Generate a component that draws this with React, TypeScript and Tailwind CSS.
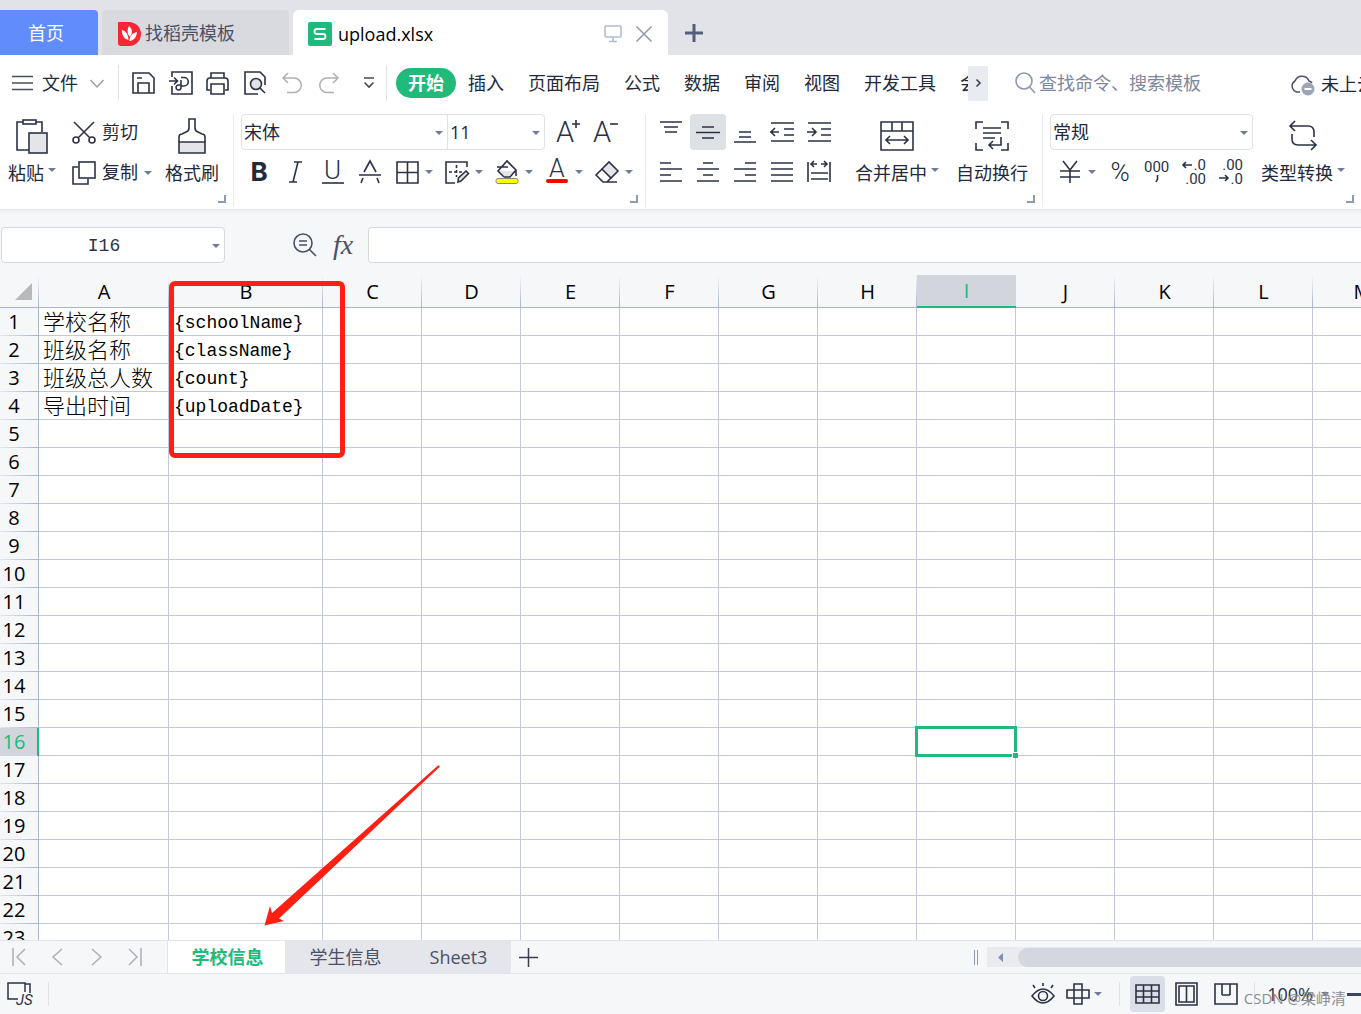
import type { ReactNode } from "react";

type IconProps = { w: number; h: number; children: ReactNode; className?: string; sw?: number };

function Icon({ w, h, children, className = "text-[#2b3245]", sw = 1.6 }: IconProps) {
  return (
    <svg
      width={w}
      height={h}
      viewBox={`0 0 ${w} ${h}`}
      fill="none"
      stroke="currentColor"
      strokeWidth={sw}
      className={`block shrink-0 overflow-visible ${className}`}
      aria-hidden="true"
    >
      {children}
    </svg>
  );
}

function Caret({ className = "" }: { className?: string }) {
  return (
    <svg width="8" height="4" viewBox="0 0 8 4" className={`block shrink-0 ${className}`} aria-hidden="true">
      <path d="M0 0H8L4 4Z" fill="#6f7c99" />
    </svg>
  );
}

function Launcher() {
  return (
    <button aria-label="更多设置" className="block">
      <Icon w={8} h={8} className="text-[#8e99b3]" sw={2}>
        <path d="M0 7H7V0" />
      </Icon>
    </button>
  );
}

function Group({ width, last, children }: { width: string; last?: boolean; children: ReactNode }) {
  return (
    <div className={`flex shrink-0 flex-col pl-[7px] ${width} ${last ? "" : "border-r border-[#eaecf0]"}`}>
      <div className="flex items-start">{children}</div>
      <div className="flex justify-end pt-[5px] pr-[7px]">
        <Launcher />
      </div>
    </div>
  );
}

function Tool({ label, caret, active, children }: { label: string; caret?: boolean; active?: boolean; children: ReactNode }) {
  return (
    <button aria-label={label} title={label} className={`flex h-9 shrink-0 items-center ${caret ? "w-[50px]" : "w-[37px]"}`}>
      <span className={`flex h-9 w-9 items-center justify-center rounded ${active ? "bg-[#dde1e6]" : ""}`}>{children}</span>
      {caret && <Caret />}
    </button>
  );
}

function BigTool({ label, caret, children }: { label: string; caret?: boolean; children: ReactNode }) {
  return (
    <button className="flex shrink-0 flex-col items-center">
      <span className="flex h-10 items-center justify-center pt-1">{children}</span>
      <span className="flex h-9 items-center gap-1 pt-px leading-9 whitespace-nowrap">
        {label}
        {caret && <Caret className="mb-1.5" />}
      </span>
    </button>
  );
}

function Combo({ label, value, className }: { label: string; value: string; className: string }) {
  return (
    <div className={`relative h-9 shrink-0 border border-[#dfe1e6] bg-white ${className}`}>
      <select aria-label={label} className="h-full w-full appearance-none bg-transparent pt-px pr-5 pl-0.5 outline-none">
        <option>{value}</option>
      </select>
      <Caret className="pointer-events-none absolute top-4 right-1" />
    </div>
  );
}

const thinText = { fontFamily: "Roboto", fontWeight: 300, fill: "currentColor", stroke: "none" };
const digitText = { fontFamily: "Roboto", fontWeight: 400, fill: "currentColor", stroke: "none" };

function TabBar() {
  return (
    <div className="flex h-[55px] shrink-0 items-end bg-[#e1e3e8]">
      <button className="h-[45px] w-[98px] rounded-tr bg-[#618dfc] pt-0.5 pr-1.5 text-white">首页</button>
      <button className="ml-1 flex h-[45px] w-[187px] items-center rounded-t bg-[#d9dadf] pt-0.5 pl-4 text-[#4a5166]">
        <svg width="23" height="24" viewBox="0 0 23 24" className="mr-1 block" aria-hidden="true">
          <path d="M1 0H11A12 12 0 0 1 11 24H3Q0 24 0 21V1Q0 0 1 0Z" fill="#fb2536" />
          <path d="M11 4C15 8 14.500 11 12 15C9 12 9 8 11 4Z" fill="#fff" />
          <path d="M4 8C8 9.500 10 12 10.500 18C6 17 3.500 13 4 8Z" fill="#fff" />
          <path d="M19 10C18.500 15 16 18.500 11.500 19C11.500 14.500 14 11 19 10Z" fill="#fff" />
        </svg>
        找稻壳模板
      </button>
      <div className="ml-1 flex h-[45px] w-[375px] items-center rounded-t-md bg-white pt-0.5 pr-4 pl-[15px] text-black">
        <svg width="24" height="24" viewBox="0 0 24 24" className="block" aria-hidden="true">
          <rect width="24" height="24" rx="2" fill="#1fba7b" />
          <path d="M17.500 7H9Q6.500 7 6.500 9.500T9 12H15Q17.500 12 17.500 14.500T15 17H6.500" fill="none" stroke="#fff" strokeWidth="1.800" />
        </svg>
        <span className="ml-1.5 leading-6">upload.xlsx</span>
        <button aria-label="演示" className="ml-auto">
          <Icon w={18} h={18} className="text-[#b3bccf]">
            <rect x="1" y="1" width="16" height="11" rx="1" />
            <path d="M9 12V16M5 16.500H13" />
          </Icon>
        </button>
        <button aria-label="关闭" className="ml-[14px]">
          <Icon w={16} h={16} className="text-[#8c97b0]" sw={1.5}>
            <path d="M.5 .5L15.500 15.500M15.500 .5L.5 15.500" />
          </Icon>
        </button>
      </div>
      <button aria-label="新建" className="ml-[17px] flex h-[45px] items-center">
        <Icon w={18} h={18} className="text-[#535e7b]" sw={3}>
          <path d="M9 0V18M0 9H18" />
        </Icon>
      </button>
    </div>
  );
}

function QuickButton({ label, children, className = "w-[38px]" }: { label: string; children: ReactNode; className?: string }) {
  return (
    <button aria-label={label} title={label} className={`flex h-9 shrink-0 items-center justify-center ${className}`}>
      {children}
    </button>
  );
}

function MenuBar() {
  const tabs = ["插入", "页面布局", "公式", "数据", "审阅", "视图", "开发工具", "会"];
  return (
    <div className="flex h-[55px] shrink-0 items-center bg-white pt-px text-[#23293a]">
      <button className="flex h-9 shrink-0 items-center pl-3">
        <Icon w={21} h={16} className="text-[#4a4f5c]" sw={1.5}>
          <path d="M0 1.500H21M0 8H21M0 14.500H21" />
        </Icon>
        <span className="ml-[9px] pt-px whitespace-nowrap">文件</span>
        <Icon w={14} h={9} className="ml-3 text-[#9a9da5]" sw={1.5}>
          <path d="M.5 1L7 8L13.500 1" />
        </Icon>
      </button>
      <div className="ml-[14px] flex h-9 shrink-0 items-center border-x border-[#e1e4ea] pl-[5px]">
        <QuickButton label="保存">
          <Icon w={23} h={22}>
            <path d="M1 1H17L22 6V21H1ZM6 21V11H17V21M5 6H10" />
          </Icon>
        </QuickButton>
        <QuickButton label="输出为PDF">
          <Icon w={24} h={24}>
            <path d="M3 6V1H23V23H3V15M0 10H8M5 6.500L8.500 10L5 13.500M12 6.500H15A4 4 0 0 1 15 15H12V16A2.500 2.500 0 1 1 9.500 14H12V9" />
          </Icon>
        </QuickButton>
        <QuickButton label="打印" className="w-[34px]">
          <Icon w={23} h={23}>
            <path d="M5 6V1H18V6M4 18H1V9Q1 6 4 6H19Q22 6 22 9V18H19M5 12H18V22H5Z" />
          </Icon>
        </QuickButton>
        <QuickButton label="打印预览" className="w-[42px]">
          <Icon w={23} h={24}>
            <path d="M14 23H1V1H16L21 6V14" />
            <circle cx="12" cy="13" r="5.500" fill="#e1e3e6" />
            <path d="M16 17L21 22" />
          </Icon>
        </QuickButton>
        <QuickButton label="撤销" className="w-[31px]">
          <Icon w={20} h={22} className="text-[#adafb5]" sw={1.5}>
            <path d="M6 1L1 6L6 11M1 6H12A7 7 0 0 1 12 20.500H5" />
          </Icon>
        </QuickButton>
        <QuickButton label="恢复" className="w-[44px]">
          <Icon w={20} h={22} className="text-[#adafb5]" sw={1.5}>
            <path d="M14 1L19 6L14 11M19 6H8A7 7 0 0 0 8 20.500H15" />
          </Icon>
        </QuickButton>
        <QuickButton label="自定义" className="w-[35px]">
          <Icon w={12} h={12} className="text-[#434857]">
            <path d="M1 1H11M1.500 5.500L6 10L10.500 5.500" />
          </Icon>
        </QuickButton>
      </div>
      <nav className="ml-[9px] flex w-[572px] shrink-0 overflow-hidden whitespace-nowrap">
        <button className="h-[30px] shrink-0 rounded-full bg-[#21ba7b] px-3 pt-px font-bold text-white">开始</button>
        {tabs.map((t) => (
          <button key={t} className="h-[30px] shrink-0 px-3 pt-px">
            {t}
          </button>
        ))}
      </nav>
      <button aria-label="更多选项卡" className="flex h-[35px] w-5 shrink-0 items-center justify-center bg-[#e8ebf0]">
        <Icon w={5} h={8} className="text-[#3a4052]">
          <path d="M.5 .5L4 4L.5 7.500" />
        </Icon>
      </button>
      <label className="ml-[27px] flex min-w-0 flex-1 items-center">
        <Icon w={21} h={22} className="text-[#8c97b0]">
          <circle cx="9" cy="9" r="8" />
          <path d="M14.500 15L20 21" />
        </Icon>
        <input
          aria-label="搜索"
          placeholder="查找命令、搜索模板"
          className="ml-[3px] w-full min-w-0 bg-transparent pt-px outline-none placeholder:text-[#7b879f] placeholder:opacity-100"
        />
      </label>
      <button className="flex w-[71px] shrink-0 items-center overflow-hidden pt-0.5 whitespace-nowrap">
        <Icon w={25} h={23} className="mr-1.5 text-[#4a5166]" sw={1.5}>
          <path d="M10 19H7A6 6 0 0 1 5 8A7.500 7.500 0 0 1 19 8A6 6 0 0 1 22 10" />
          <circle cx="18" cy="16" r="6.500" fill="#9ca5b8" stroke="none" />
          <path d="M14.500 16H21.500" stroke="#fff" strokeWidth="2" />
        </Icon>
        未上云
      </button>
    </div>
  );
}

function Ribbon() {
  return (
    <div className="relative z-10 flex h-[99px] shrink-0 overflow-hidden bg-white pt-1 pb-0.5 text-[#23293a]">
      <Group width="w-[234px]">
        <div className="ml-px">
          <BigTool label="粘贴" caret>
            <Icon w={32} h={35}>
              <path d="M7 3H1V31H13M20 3H26V13" />
              <rect x="7" y="1" width="13" height="4" />
              <rect x="13" y="14" width="18" height="20" fill="#e3e5e7" />
            </Icon>
          </BigTool>
        </div>
        <div className="ml-4 flex shrink-0 flex-col gap-1">
          <button className="flex h-9 items-center gap-1.5 pt-px">
            <Icon w={24} h={24}>
              <path d="M2 1L18 17M22 1L6 17" />
              <circle cx="4" cy="19" r="3" />
              <circle cx="20" cy="19" r="3" />
            </Icon>
            剪切
          </button>
          <button className="flex h-9 items-center gap-1.5 pt-px">
            <Icon w={24} h={24}>
              <path d="M6 6H1V23H16V18" />
              <rect x="7" y="1" width="16" height="16" />
            </Icon>
            复制
            <Caret />
          </button>
        </div>
        <div className="ml-[13px]">
          <BigTool label="格式刷">
            <Icon w={28} h={36}>
              <path d="M1 24H27V35H1Z" fill="#e3e5e7" />
              <path d="M1 24V19Q1 16 4 16L8 14Q11 13 11 10V1H17V10Q17 13 20 14L24 16Q27 16 27 19V24" />
            </Icon>
          </BigTool>
        </div>
      </Group>

      <Group width="w-[412px]">
        <div className="flex flex-col gap-1">
          <div className="flex">
            <Combo label="字体" value="宋体" className="w-[207px] rounded-l" />
            <Combo label="字号" value="11" className="-ml-px w-[98px] rounded-r" />
            <div className="ml-[5px] flex">
              <Tool label="增大字号">
                <Icon w={24} h={26}>
                  <text x="0" y="23" fontSize="29" style={thinText}>A</text>
                  <path d="M16 5H24M20 1V9" />
                </Icon>
              </Tool>
              <Tool label="减小字号">
                <Icon w={24} h={26}>
                  <text x="0" y="23" fontSize="29" style={thinText}>A</text>
                  <path d="M17 5H25" />
                </Icon>
              </Tool>
            </div>
          </div>
          <div className="flex">
            <Tool label="加粗">
              <span className="font-['Inter'] text-[26px] leading-9 font-bold">B</span>
            </Tool>
            <Tool label="倾斜">
              <Icon w={14} h={22}>
                <path d="M5 1H13M0 21H8M9 1L4 21" />
              </Icon>
            </Tool>
            <Tool label="下划线">
              <Icon w={24} h={24}>
                <text x="3" y="19" fontSize="26" style={thinText}>U</text>
                <path d="M1 23H23" />
              </Icon>
            </Tool>
            <Tool label="删除线">
              <Icon w={22} h={23}>
                <path d="M5 11L11 0L17 11M0 14H22M4 17L2 22M18 17L20 22" />
              </Icon>
            </Tool>
            <Tool label="边框" caret>
              <Icon w={23} h={23}>
                <path d="M1 1H22V22H1ZM11.500 1V22M1 11.500H22" />
              </Icon>
            </Tool>
            <Tool label="绘图边框" caret>
              <Icon w={24} h={24}>
                <path d="M22 7V2H1V23H10" />
                <path d="M11.500 5V17M4 12H17" strokeDasharray="3 2" />
                <path d="M13 22L13.500 18L21 11L23.500 13.500L16 21Z" fill="#e3e5e7" />
              </Icon>
            </Tool>
            <Tool label="填充颜色" caret>
              <Icon w={24} h={24}>
                <path d="M3 11H20L12 18Z" fill="#e3e5e7" stroke="none" />
                <path d="M9 17L3 11L12 1L21 10V16M9 17H15L21 10M2 7H13" />
                <rect x="1" y="18.500" width="22" height="5" rx="2" fill="#ffff00" stroke="#8a8c70" strokeWidth="1" />
              </Icon>
            </Tool>
            <Tool label="字体颜色" caret>
              <Icon w={22} h={24}>
                <text x="3" y="17" fontSize="25" style={thinText}>A</text>
                <rect x="0" y="19" width="22" height="4" rx="2" fill="#ff0000" stroke="none" />
              </Icon>
            </Tool>
            <Tool label="清除" caret>
              <Icon w={24} h={23}>
                <path d="M7 8L14 1L23 10L16 17Z" fill="#e3e5e7" />
                <path d="M7 8L1 14L8 21H22M16 17L12 21" />
              </Icon>
            </Tool>
          </div>
        </div>
      </Group>

      <Group width="w-[397px]">
        <div className="flex shrink-0 flex-col gap-1">
          <div className="flex">
            <Tool label="顶端对齐">
              <Icon w={22} h={22}>
                <path d="M0 1H22M4 6H18M5 11H17" />
              </Icon>
            </Tool>
            <Tool label="垂直居中" active>
              <Icon w={24} h={22}>
                <path d="M6 6H18M0 11.500H24M6 17H18" />
              </Icon>
            </Tool>
            <Tool label="底端对齐">
              <Icon w={22} h={22}>
                <path d="M5 11H17M5 16H17M0 21H22" />
              </Icon>
            </Tool>
            <Tool label="减少缩进量">
              <Icon w={24} h={20}>
                <path d="M1 1H24M14 7H24M14 13H24M1 19H24M0 10H9M5 6L1 10L5 14" />
              </Icon>
            </Tool>
            <Tool label="增加缩进量">
              <Icon w={24} h={20}>
                <path d="M1 1H24M14 7H24M14 13H24M1 19H24M0 10H9M5 6L9 10L5 14" />
              </Icon>
            </Tool>
          </div>
          <div className="flex">
            <Tool label="左对齐">
              <Icon w={22} h={20}>
                <path d="M0 1H11M0 7H22M0 13H11M0 19H22" />
              </Icon>
            </Tool>
            <Tool label="水平居中">
              <Icon w={22} h={20}>
                <path d="M6 1H16M0 7H22M6 13H16M0 19H22" />
              </Icon>
            </Tool>
            <Tool label="右对齐">
              <Icon w={22} h={20}>
                <path d="M11 1H22M0 7H22M11 13H22M0 19H22" />
              </Icon>
            </Tool>
            <Tool label="两端对齐">
              <Icon w={22} h={20}>
                <path d="M0 1H22M0 7H22M0 13H22M0 19H22" />
              </Icon>
            </Tool>
            <Tool label="分散对齐">
              <Icon w={24} h={22}>
                <path d="M1 1V21M23 1V21M4 12H21M4 18H21M4 3H10M7 0L4 3L7 6M14 3H20M17 0L20 3L17 6" />
              </Icon>
            </Tool>
          </div>
        </div>
        <div className="ml-[17px] flex gap-[17px]">
          <BigTool label="合并居中" caret>
            <Icon w={34} h={30}>
              <path d="M1 1H33V29H1ZM1 10H33M12 1V10M22 1V10M6 19H28M10 15L6 19L10 23M24 15L28 19L24 23" />
            </Icon>
          </BigTool>
          <BigTool label="自动换行">
            <Icon w={34} h={30}>
              <path d="M1 8V1H8M26 1H33V8M1 22V29H8M33 22V29H26M8 7H26M8 12H26M8 17H20M26 16V24H14M18 20L14 24L18 28" />
            </Icon>
          </BigTool>
        </div>
      </Group>

      <Group width="w-[318px]" last>
        <div className="flex shrink-0 flex-col gap-1">
          <Combo label="数字格式" value="常规" className="w-[203px] rounded" />
          <div className="flex pl-0.5">
            <Tool label="货币" caret>
              <Icon w={22} h={22}>
                <path d="M4 0L11 9L18 0M1 10H21M1 16H21M11 9V22" />
              </Icon>
            </Tool>
            <Tool label="百分比">
              <span className="font-['Roboto'] text-[26px] leading-9 font-light">%</span>
            </Tool>
            <Tool label="千位分隔">
              <Icon w={26} h={25}>
                <text x="0" y="12" fontSize="15" style={digitText}>000</text>
                <path d="M13.500 15V19L12 22" />
              </Icon>
            </Tool>
            <Tool label="减少小数位数">
              <Icon w={24} h={26}>
                <text x="24" y="11" fontSize="15" textAnchor="end" style={digitText}>.0</text>
                <text x="24" y="25" fontSize="15" textAnchor="end" style={digitText}>.00</text>
                <path d="M1 6H10M4 3L1 6L4 9" />
              </Icon>
            </Tool>
            <Tool label="增加小数位数">
              <Icon w={24} h={26}>
                <text x="24" y="11" fontSize="15" textAnchor="end" style={digitText}>.00</text>
                <text x="24" y="25" fontSize="15" textAnchor="end" style={digitText}>.0</text>
                <path d="M0 19H9M6 16L9 19L6 22" />
              </Icon>
            </Tool>
          </div>
        </div>
        <div className="ml-2">
          <BigTool label="类型转换" caret>
            <Icon w={28} h={32}>
              <path d="M6 1L1 6L6 11M1 6H19Q25 6 25 12V17M22 20L27 25L22 30M27 25H9Q3 25 3 19V14" />
            </Icon>
          </BigTool>
        </div>
      </Group>
    </div>
  );
}

function FormulaBar() {
  return (
    <div className="flex h-[66px] shrink-0 items-center border-t border-[#e6e8ea] bg-linear-to-b from-[#eceef0] from-0% to-[#f6f7f9] to-8% pt-1 pl-px">
      <div className="relative h-9 w-[224px] shrink-0 rounded border border-[#d6d8dd] bg-white">
        <input
          aria-label="名称框"
          defaultValue="I16"
          className="h-full w-full bg-transparent pt-0.5 pr-[18px] text-center font-['Liberation_Mono',monospace] text-[#2b3245] outline-none"
        />
        <Caret className="pointer-events-none absolute top-4 right-1" />
      </div>
      <button aria-label="查找函数" className="ml-[68px]">
        <Icon w={24} h={24} className="text-[#4a5166]">
          <circle cx="10" cy="10" r="9" />
          <path d="M6 8H14M6 12H14M16.500 16.500L23 23" />
        </Icon>
      </button>
      <button aria-label="插入函数" className="ml-[14px] w-[24px] font-['Liberation_Serif',serif] text-[28px] leading-9 text-[#4a5166] italic">
        fx
      </button>
      <input aria-label="编辑栏" className="ml-[13px] h-9 min-w-0 flex-1 rounded-l border border-r-0 border-[#d6d8dd] bg-white px-2 outline-none" />
    </div>
  );
}

const columns = ["A", "B", "C", "D", "E", "F", "G", "H", "I", "J", "K", "L", "M"];
const rows = Array.from({ length: 23 }, (_, i) => i + 1);
const cells: Record<string, string> = {
  A1: "学校名称",
  B1: "{schoolName}",
  A2: "班级名称",
  B2: "{className}",
  A3: "班级总人数",
  B3: "{count}",
  A4: "导出时间",
  B4: "{uploadDate}",
};

function Sheet() {
  return (
    <div className="relative min-h-0 flex-1 overflow-hidden bg-white">
      <table className="w-[1412px] table-fixed border-separate border-spacing-0 text-black">
        <colgroup>
          <col className="w-[39px]" />
          {columns.map((c) => (
            <col key={c} className={c === "A" ? "w-[130px]" : c === "B" ? "w-[154px]" : "w-[99px]"} />
          ))}
        </colgroup>
        <thead>
          <tr className="h-[33px] bg-[#f6f7f9] text-[20px] leading-[31px]">
            <th aria-label="全选" className="border-b border-[#a9b4cd] bg-[linear-gradient(to_bottom,#f6f7f9,#a9b4cd)] bg-[length:1px_100%] bg-right bg-no-repeat p-0">
              <svg width="17" height="17" viewBox="0 0 17 17" className="ml-[15px] block" aria-hidden="true">
                <path d="M17 0V17H0Z" fill="#b9b9b9" />
              </svg>
            </th>
            {columns.map((c) =>
              c === "I" ? (
                <th key={c} scope="col" className="border-b-2 border-[#21ba7b] bg-[#d2d5dc] p-0 font-normal text-[#21ba7b]">
                  {c}
                </th>
              ) : (
                <th
                  key={c}
                  scope="col"
                  className="border-b border-[#a9b4cd] bg-[linear-gradient(to_bottom,#f6f7f9,#a9b4cd)] bg-[length:1px_100%] bg-right bg-no-repeat p-0 font-normal"
                >
                  {c}
                </th>
              ),
            )}
          </tr>
        </thead>
        <tbody>
          {rows.map((r) => (
            <tr key={r} className="h-7">
              <th
                scope="row"
                className={
                  r === 16
                    ? "border-r-2 border-[#21ba7b] bg-[#d2d5dc] p-0 pr-[9px] text-[20px] leading-7 font-normal text-[#21ba7b]"
                    : "border-r border-[#a9b4cd] bg-[#f6f7f9] bg-[linear-gradient(to_right,#e3e7ee,#a9b4cd)] bg-[length:100%_1px] bg-bottom bg-no-repeat p-0 pr-2.5 text-[20px] leading-7 font-normal"
                }
              >
                {r}
              </th>
              {columns.map((c) => {
                const id = `${c}${r}`;
                return (
                  <td
                    key={id}
                    className={`relative border-r border-b border-[#c3c9da] p-0 whitespace-nowrap ${
                      c === "A"
                        ? "pl-1 text-[22px] leading-[27px] font-light"
                        : "pt-1 pl-[5px] font-['Liberation_Mono',monospace] text-[18px] leading-[23px]"
                    }`}
                  >
                    {cells[id]}
                    {id === "I16" && (
                      <div className="absolute -inset-0.5 z-10 border-[3px] border-[#21ba7b]">
                        <div className="absolute -right-1 -bottom-1 h-1.5 w-1.5 border-t border-l border-white bg-[#21ba7b]" />
                      </div>
                    )}
                  </td>
                );
              })}
            </tr>
          ))}
        </tbody>
      </table>
      <div className="pointer-events-none absolute top-1.5 left-[169px] z-20 h-[177px] w-[176px] rounded-md border-[5px] border-[#ff2013]" />
      <svg width="176" height="161" viewBox="0 0 176 161" className="pointer-events-none absolute top-[490px] left-[264px] z-20" aria-hidden="true">
        <path d="M175.500 .5L174 .5L8 148L6 141L0.500 160.500L20 156L15 153.500L175.500 2Z" fill="#ff2013" />
      </svg>
    </div>
  );
}

function SheetTabs() {
  return (
    <div className="flex h-[34px] shrink-0 items-stretch border-y border-[#e1e4ea] bg-[#f6f7f9] text-[#4a5166]">
      <div className="flex w-[168px] shrink-0 items-center border-r border-[#e1e4ea] pl-3 text-[#adafb5]">
        <button aria-label="第一个工作表">
          <Icon w={14} h={18} className="" sw={1.5}>
            <path d="M1 0V18M13 1L5 9L13 17" />
          </Icon>
        </button>
        <button aria-label="上一个工作表" className="ml-[26px]">
          <Icon w={11} h={18} className="" sw={1.5}>
            <path d="M10 1L1 9L10 17" />
          </Icon>
        </button>
        <button aria-label="下一个工作表" className="ml-7">
          <Icon w={11} h={18} className="" sw={1.5}>
            <path d="M1 1L10 9L1 17" />
          </Icon>
        </button>
        <button aria-label="最后一个工作表" className="ml-[26px]">
          <Icon w={14} h={18} className="" sw={1.5}>
            <path d="M13 0V18M1 1L9 9L1 17" />
          </Icon>
        </button>
      </div>
      <button className="w-[117px] shrink-0 bg-white pl-0.5 font-bold text-[#21ba7b]">学校信息</button>
      <button className="w-[121px] shrink-0 bg-[#e4e6eb]">学生信息</button>
      <button className="w-[105px] shrink-0 bg-[#e4e6eb]">Sheet3</button>
      <button aria-label="新建工作表" className="ml-2 flex items-center">
        <Icon w={19} h={19} className="text-[#3a4052]" sw={1.5}>
          <path d="M9.500 0V19M0 9.500H19" />
        </Icon>
      </button>
      <div className="ml-auto flex w-[387px] shrink-0 items-center">
        <div className="h-[15px] w-1 border-x border-[#8e99b3]" />
        <div className="ml-[9px] flex h-5 flex-1 items-center bg-[#e9ebef] pl-[11px]">
          <button aria-label="向左滚动">
            <svg width="5" height="9" viewBox="0 0 5 9" className="block" aria-hidden="true">
              <path d="M5 0V9L0 4.500Z" fill="#8390ab" />
            </svg>
          </button>
          <div className="ml-[15px] h-[19px] flex-1 rounded-l-full bg-[#d4d7df]" />
        </div>
      </div>
    </div>
  );
}

function StatusBar() {
  return (
    <div className="relative flex h-10 shrink-0 items-center bg-[#f6f7f9] text-[#2b3245]">
      <button aria-label="JS宏" className="ml-[7px]">
        <Icon w={27} h={24} sw={1.5}>
          <path d="M11 17H1V1H18V10M18 2H23V11" />
          <text x="9" y="23" fontSize="15" fontStyle="italic" style={digitText}>JS</text>
        </Icon>
      </button>
      <div className="ml-[14px] h-6 w-px bg-[#dfe2e8]" />
      <div className="ml-auto flex shrink-0 items-center">
        <button aria-label="护眼模式">
          <Icon w={24} h={24}>
            <path d="M1 14Q12 0 23 14Q12 28 1 14Z" />
            <circle cx="12" cy="14" r="4.500" />
            <path d="M12 1V4M2 3L4 6M22 3L20 6" />
          </Icon>
        </button>
        <button aria-label="阅读模式" className="ml-[11px] flex items-center">
          <Icon w={24} h={22}>
            <path d="M8 1H16V21H8ZM1 7H23V15H1Z" />
          </Icon>
          <Caret className="ml-1" />
        </button>
        <div className="ml-[17px] h-6 w-px bg-[#dfe2e8]" />
        <button aria-label="普通视图" className="ml-[10px] flex h-9 w-[35px] items-center justify-center rounded bg-[#dadee6]">
          <Icon w={25} h={20}>
            <path d="M1 1H24V19H1ZM1 7H24M1 13H24M8.500 1V19M16.500 1V19" />
          </Icon>
        </button>
        <button aria-label="分页预览" className="ml-[10px]">
          <Icon w={23} h={24}>
            <path d="M1 1H22V23H1ZM4 4H19V20H4ZM11.500 4V20" />
          </Icon>
        </button>
        <button aria-label="页面布局视图" className="ml-4">
          <Icon w={24} h={22}>
            <path d="M1 1H23V21H1ZM8 1V12M8 12H16M16 1V12" />
          </Icon>
        </button>
        <div className="ml-4 h-6 w-px bg-[#dfe2e8]" />
        <button className="ml-3 flex items-center gap-2">
          100%
          <Caret />
        </button>
        <button aria-label="缩小" className="ml-[18px] flex h-6 w-[14px] items-center">
          <span className="h-[3px] w-full bg-[#3a4562]" />
        </button>
      </div>
      <span className="pointer-events-none absolute right-[15px] bottom-1.5 text-[15px] leading-5 whitespace-nowrap text-[#8b8d92]">CSDN @梁峥清</span>
    </div>
  );
}

export default function App() {
  return (
    <div className="flex h-screen flex-col overflow-hidden bg-[#f6f7f9] font-['Open_Sans','Noto_Sans_CJK_SC',sans-serif] text-[18px]">
      <TabBar />
      <MenuBar />
      <Ribbon />
      <FormulaBar />
      <Sheet />
      <SheetTabs />
      <StatusBar />
    </div>
  );
}
